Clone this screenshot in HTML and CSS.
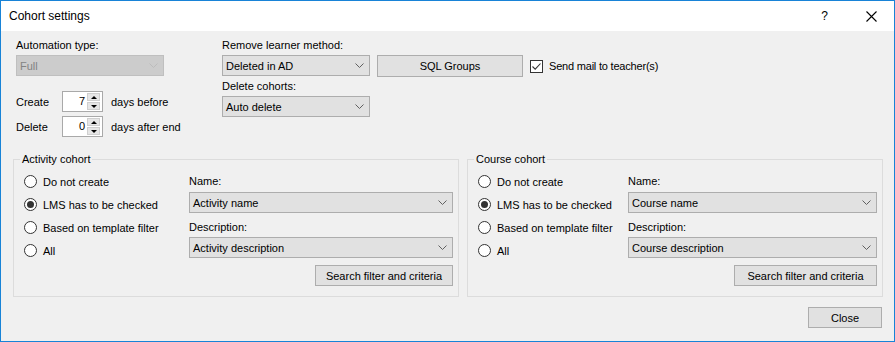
FILE: index.html
```html
<!DOCTYPE html>
<html lang="en">
<head>
    <meta charset="UTF-8">
    <title>Cohort settings</title>
    <link rel="stylesheet" href="styles.css">
</head>
<body>

<div class="dialog">
    <div class="titlebar">
        <span class="title">Cohort settings</span>
        <span class="help">?</span>
        <span class="close-x">
            <svg width="11" height="11" viewBox="0 0 11 11"><path d="M0.5 0.5 L10.5 10.5 M10.5 0.5 L0.5 10.5" stroke="#000" stroke-width="1.1" fill="none"/></svg>
        </span>
    </div>

    <div class="content">
        <div class="top">
            <div class="col-left">
                <div class="label">Automation type:</div>
                <div class="combo disabled">
                    <span>Full</span>
                    <svg class="chev" width="9" height="5" viewBox="0 0 9 5"><path d="M0.5 0.5 L4.5 4.5 L8.5 0.5" stroke="#bcbcbc" fill="none"/></svg>
                </div>
                <div class="spin-row first">
                    <span class="spin-label">Create</span>
                    <div class="spin">
                        <span class="spin-value">7</span>
                        <div class="spin-arrows">
                            <span class="arrow up"></span>
                            <span class="arrow down"></span>
                        </div>
                    </div>
                    <span>days before</span>
                </div>
                <div class="spin-row">
                    <span class="spin-label">Delete</span>
                    <div class="spin">
                        <span class="spin-value">0</span>
                        <div class="spin-arrows">
                            <span class="arrow up"></span>
                            <span class="arrow down"></span>
                        </div>
                    </div>
                    <span>days after end</span>
                </div>
            </div>

            <div class="col-mid">
                <div class="label">Remove learner method:</div>
                <div class="combo">
                    <span>Deleted in AD</span>
                    <svg class="chev" width="9" height="5" viewBox="0 0 9 5"><path d="M0.5 0.5 L4.5 4.5 L8.5 0.5" stroke="#606060" fill="none"/></svg>
                </div>
                <div class="label second">Delete cohorts:</div>
                <div class="combo">
                    <span>Auto delete</span>
                    <svg class="chev" width="9" height="5" viewBox="0 0 9 5"><path d="M0.5 0.5 L4.5 4.5 L8.5 0.5" stroke="#606060" fill="none"/></svg>
                </div>
            </div>

            <div class="col-right">
                <div class="btn sql">SQL Groups</div>
                <div class="check">
                    <span class="check-box">
                        <svg width="11" height="11" viewBox="0 0 11 11"><path d="M1.5 5.5 L4.2 8.2 L9.5 2.5" stroke="#333" stroke-width="1.1" fill="none"/></svg>
                    </span>
                    <span>Send mail to teacher(s)</span>
                </div>
            </div>
        </div>

        <div class="groups">
            <fieldset class="group activity">
                <legend>Activity cohort</legend>
                <div class="radios">
                    <div class="radio"><span class="dot"></span>Do not create</div>
                    <div class="radio checked"><span class="dot"></span>LMS has to be checked</div>
                    <div class="radio"><span class="dot"></span>Based on template filter</div>
                    <div class="radio"><span class="dot"></span>All</div>
                </div>
                <div class="fields">
                    <div class="label">Name:</div>
                    <div class="combo">
                        <span>Activity name</span>
                        <svg class="chev" width="9" height="5" viewBox="0 0 9 5"><path d="M0.5 0.5 L4.5 4.5 L8.5 0.5" stroke="#606060" fill="none"/></svg>
                    </div>
                    <div class="label desc">Description:</div>
                    <div class="combo">
                        <span>Activity description</span>
                        <svg class="chev" width="9" height="5" viewBox="0 0 9 5"><path d="M0.5 0.5 L4.5 4.5 L8.5 0.5" stroke="#606060" fill="none"/></svg>
                    </div>
                    <div class="btn search">Search filter and criteria</div>
                </div>
            </fieldset>

            <fieldset class="group course">
                <legend>Course cohort</legend>
                <div class="radios">
                    <div class="radio"><span class="dot"></span>Do not create</div>
                    <div class="radio checked"><span class="dot"></span>LMS has to be checked</div>
                    <div class="radio"><span class="dot"></span>Based on template filter</div>
                    <div class="radio"><span class="dot"></span>All</div>
                </div>
                <div class="fields">
                    <div class="label">Name:</div>
                    <div class="combo">
                        <span>Course name</span>
                        <svg class="chev" width="9" height="5" viewBox="0 0 9 5"><path d="M0.5 0.5 L4.5 4.5 L8.5 0.5" stroke="#606060" fill="none"/></svg>
                    </div>
                    <div class="label desc">Description:</div>
                    <div class="combo">
                        <span>Course description</span>
                        <svg class="chev" width="9" height="5" viewBox="0 0 9 5"><path d="M0.5 0.5 L4.5 4.5 L8.5 0.5" stroke="#606060" fill="none"/></svg>
                    </div>
                    <div class="btn search">Search filter and criteria</div>
                </div>
            </fieldset>
        </div>

        <div class="footer">
            <div class="btn close">Close</div>
        </div>
    </div>
</div>

</body>
</html>
```

FILE: styles.css
```css
body {
    margin: 0;
    font-family: 'Liberation Sans', Arial, sans-serif;
    font-size: 11px;
    color: #000;
    background: #fff;
}
.dialog {
    width: 895px;
    height: 342px;
    box-sizing: border-box;
    border: 1px solid #1883d7;
    background: #f0f0f0;
}
.titlebar {
    height: 30px;
    background: #fff;
    display: flex;
    align-items: center;
    padding-left: 8px;
}
.title {
    font-size: 12px;
    flex: 1;
}
.help {
    font-size: 12px;
    margin-right: 38px;
}
.close-x {
    display: flex;
    margin-right: 17px;
}
.content {
    padding: 7px 11px 0 12px;
}
.label {
    line-height: 15px;
    height: 15px;
    white-space: nowrap;
}

/* top area */
.top {
    display: flex;
    padding-left: 3px;
}
.col-left {
    width: 206px;
}
.col-mid {
    width: 148px;
    margin-right: 7px;
}
.col-left .combo,
.col-mid .combo {
    width: 148px;
}
.combo {
    box-sizing: border-box;
    height: 21px;
    margin-top: 2px;
    background: #e1e1e1;
    border: 1px solid #adadad;
    display: flex;
    align-items: center;
    justify-content: space-between;
    padding: 0 5px 0 3px;
    white-space: nowrap;
}
.combo.disabled {
    background: #cccccc;
    border-color: #bfbfbf;
    color: #838383;
}
.col-mid .label.second {
    margin-top: 3px;
}
.spin-row {
    display: flex;
    align-items: center;
    height: 21px;
    margin-top: 4px;
}
.spin-row.first {
    margin-top: 15px;
}
.spin-label {
    width: 46px;
}
.spin {
    box-sizing: border-box;
    width: 41px;
    height: 21px;
    margin-right: 8px;
    background: #fff;
    border: 1px solid #a9a9a9;
    display: flex;
    align-items: stretch;
    padding: 1px 2px 1px 0;
}
.spin-value {
    flex: 1;
    text-align: right;
    line-height: 17px;
    padding-right: 2px;
}
.spin-arrows {
    width: 13px;
    display: flex;
    flex-direction: column;
    gap: 1px;
}
.arrow {
    flex: 1;
    background: #e6e6e6;
    border: 1px solid #cfcfcf;
    position: relative;
}
.arrow::after {
    content: "";
    position: absolute;
    left: 3px;
    top: 2px;
    border-left: 3px solid transparent;
    border-right: 3px solid transparent;
}
.arrow.up::after {
    border-bottom: 3px solid #000;
}
.arrow.down::after {
    border-top: 3px solid #000;
}
.col-right {
    display: flex;
    align-items: center;
    height: 22px;
    margin-top: 17px;
}
.btn {
    box-sizing: border-box;
    height: 21px;
    background: #e1e1e1;
    border: 1px solid #adadad;
    display: flex;
    align-items: center;
    justify-content: center;
    white-space: nowrap;
}
.btn.sql {
    width: 146px;
    height: 22px;
}
.check {
    display: flex;
    align-items: center;
    margin-left: 7px;
    letter-spacing: -0.2px;
}
.check-box {
    box-sizing: border-box;
    width: 13px;
    height: 13px;
    border: 1px solid #333;
    background: #fff;
    margin-right: 6px;
    display: flex;
}

/* group boxes */
.groups {
    display: flex;
    gap: 8px;
    margin-top: 15px;
}
.group {
    margin: 0;
    min-width: 0;
    box-sizing: border-box;
    border: 1px solid #dcdcdc;
    padding: 3px 5px 10px 6px;
    display: grid;
}
.group.activity {
    width: 446px;
    grid-template-columns: 169px 1fr;
}
.group.course {
    width: 416px;
    grid-template-columns: 154px 1fr;
}
legend {
    padding: 0 2px;
    line-height: 15px;
}
.radios {
    padding-left: 4px;
}
.radio {
    height: 23px;
    display: flex;
    align-items: center;
    white-space: nowrap;
}
.dot {
    box-sizing: border-box;
    width: 13px;
    height: 13px;
    border: 1px solid #333;
    border-radius: 50%;
    background: #fff;
    margin-right: 6px;
    display: flex;
    align-items: center;
    justify-content: center;
}
.radio.checked .dot::after {
    content: "";
    width: 7px;
    height: 7px;
    border-radius: 50%;
    background: #333;
}
.fields {
    padding-top: 4px;
    display: flex;
    flex-direction: column;
}
.fields .combo {
    margin-top: 3px;
}
.fields .label.desc {
    margin-top: 7px;
}
.fields .combo + .label.desc + .combo {
    margin-top: 2px;
}
.btn.search {
    align-self: flex-end;
    width: 138px;
    margin-top: 7px;
}
.course .btn.search {
    width: 143px;
}

.footer {
    display: flex;
    justify-content: flex-end;
    margin-top: 10px;
    padding-right: 1px;
}
.btn.close {
    width: 74px;
}
```
